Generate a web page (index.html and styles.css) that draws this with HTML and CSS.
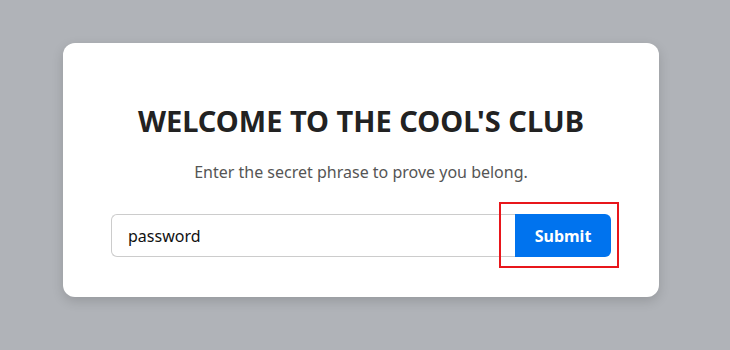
FILE: index.html
```html
<!DOCTYPE html>
<html lang="en">
<head>
    <meta charset="UTF-8">
    <meta name="viewport" content="width=device-width, initial-scale=1.0">
    <title>Cool's Club</title>
    <link rel="stylesheet" href="styles.css">
</head>
<body>
    <div class="card">
        <h1>WELCOME TO THE COOL'S CLUB</h1>
        <p class="hint">Enter the secret phrase to prove you belong.</p>
        <form class="phrase-form">
            <input class="phrase-input" type="text" value="password">
            <button class="submit-btn" type="button">Submit</button>
        </form>
    </div>
</body>
</html>
```

FILE: styles.css
```css
* {
    margin: 0;
    padding: 0;
    box-sizing: border-box;
    font-family: 'Noto Sans', 'Open Sans', sans-serif;
}

body {
    min-height: 100vh;
    background: #b0b3b8;
    padding: 43px 71px 0 63px;
}

.card {
    width: 596px;
    height: 254px;
    background: #fff;
    border-radius: 12px;
    box-shadow: 0 4px 12px rgba(0, 0, 0, 0.15);
    padding: 58px 48px 0;
    text-align: center;
}

h1 {
    font-size: 29px;
    font-weight: 700;
    color: #222;
    line-height: 40px;
}

.hint {
    margin-top: 20px;
    font-size: 16px;
    color: #555;
    line-height: 22px;
}

.phrase-form {
    display: flex;
    margin-top: 31px;
    height: 43px;
}

.phrase-input {
    flex: 1;
    border: 1px solid #ccc;
    border-right: none;
    border-radius: 6px 0 0 6px;
    padding: 0 16px;
    font-size: 16px;
    color: #111;
    outline: none;
}

.submit-btn {
    position: relative;
    width: 96px;
    border: none;
    border-radius: 0 6px 6px 0;
    background: #0073ee;
    color: #fff;
    font-size: 16px;
    font-weight: 700;
    cursor: pointer;
}

.submit-btn::after {
    content: '';
    position: absolute;
    box-sizing: border-box;
    left: -16px;
    top: -12px;
    width: 120px;
    height: 66px;
    border: 2px solid #e8161b;
}
```
